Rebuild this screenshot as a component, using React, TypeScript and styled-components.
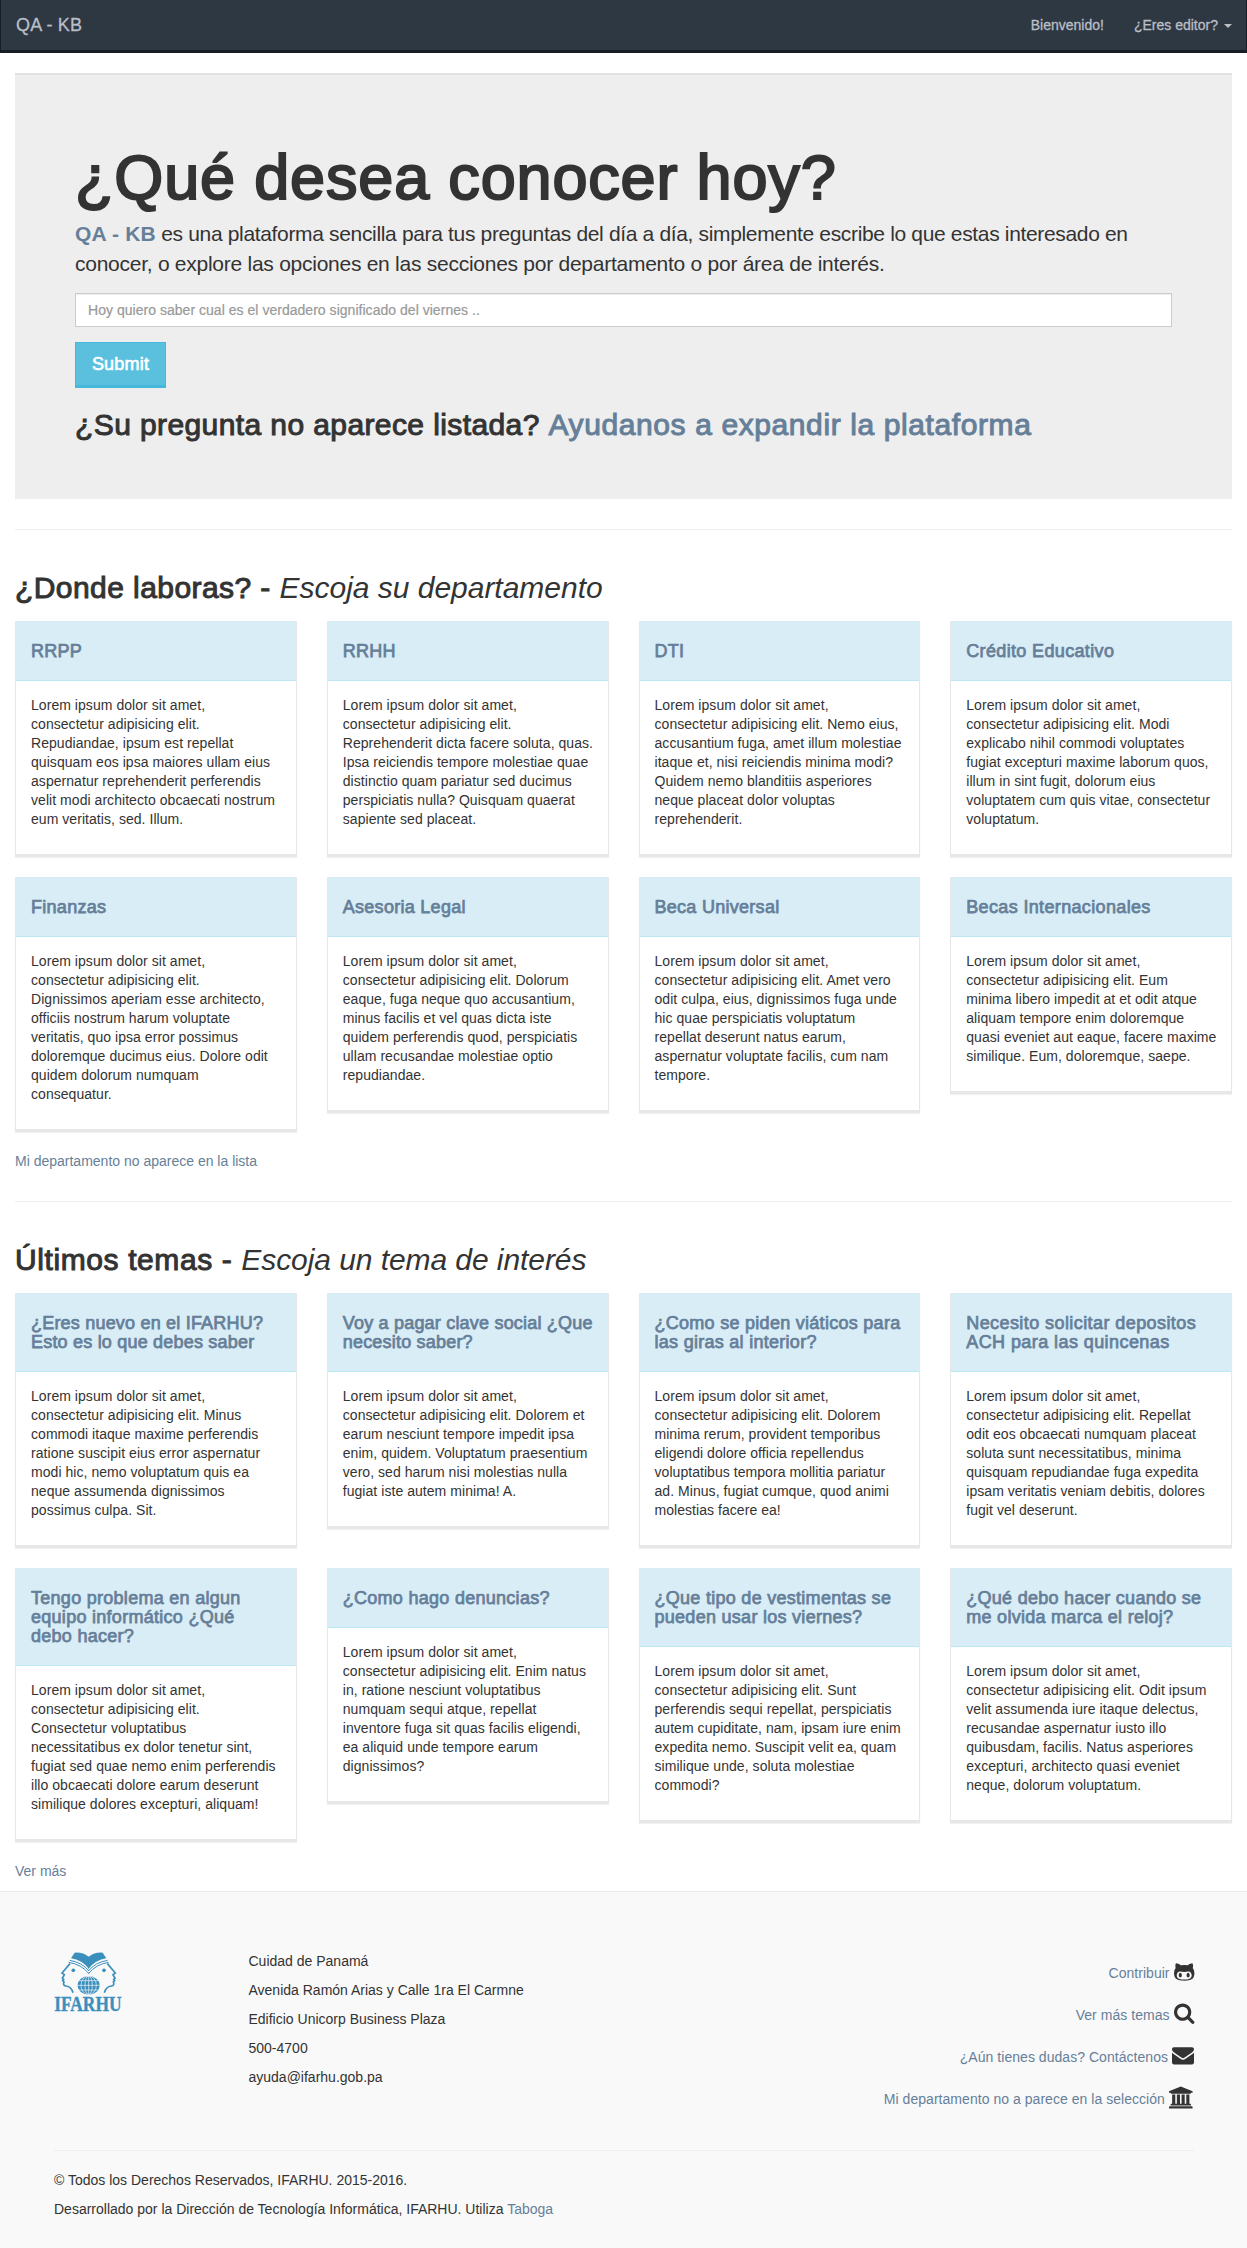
import React from "react";
import styled, { createGlobalStyle } from "styled-components";

const ink = "#333333";
const link = "#667f99";

const GlobalStyle = createGlobalStyle`
  *, *::before, *::after { box-sizing: border-box; }
  body {
    margin: 0;
    background: #fff;
    color: ${ink};
    font-family: "Helvetica Neue", "Liberation Sans", Arial, sans-serif;
    font-size: 14px;
    line-height: 19px;
    letter-spacing: 0;
  }
  h1, h2, h3, p, ul { margin: 0; padding: 0; font-weight: 400; }
  ul { list-style: none; }
`;

const Link = styled.a`
  color: ${link};
  text-decoration: none;
`;

const Navbar = styled.nav`
  display: flex;
  justify-content: space-between;
  height: 53px;
  padding: 0 14px 0 15px;
  background: #2e3842;
  border: solid #191e26;
  border-width: 0 1px 3px;
  line-height: 50px;
  a { color: #b9bec8; text-decoration: none; }
`;

const Brand = styled.a`
  font-size: 18px;
  letter-spacing: 0.15px;
  -webkit-text-stroke: 0.3px;
`;

const NavLinks = styled.div`
  display: flex;
  gap: 30px;
  a { -webkit-text-stroke: 0.3px; letter-spacing: 0; }
`;

const Caret = styled.span`
  display: inline-block;
  margin-left: 6px;
  vertical-align: middle;
  border: 4px solid transparent;
  border-top-color: currentColor;
  border-bottom: 0;
`;

const Container = styled.main`
  padding: 20px 15px 10px;
`;

const Jumbotron = styled.section`
  height: 426px;
  padding: 68px 60px 0;
  background: #eeeeee;
  border-top: 2px solid #e1e1e1;
`;

const HeroTitle = styled.h1`
  font-size: 63px;
  line-height: 69px;
  letter-spacing: 0.83px;
  -webkit-text-stroke: 2.1px;
`;

const Lead = styled.p`
  margin-top: 7px;
  font-size: 21px;
  line-height: 29.5px;
`;

const LeadLine = styled.span<{ $track: number }>`
  display: block;
  white-space: nowrap;
  letter-spacing: ${(p) => p.$track}px;
`;

const AppName = styled.b`
  color: ${link};
  letter-spacing: 0.15px;
`;

const SearchInput = styled.input`
  display: block;
  width: 100%;
  height: 34px;
  margin-top: 15px;
  padding: 6px 12px;
  border: 1px solid #cccccc;
  border-radius: 0;
  background: #fff;
  box-shadow: inset 0 1px 1px rgba(0, 0, 0, 0.075);
  font: inherit;
  letter-spacing: 0.03px;
  &::placeholder { color: #999; opacity: 1; -webkit-text-stroke: 0.2px; }
`;

const SubmitButton = styled.button`
  display: block;
  width: 91px;
  height: 46px;
  margin-top: 15px;
  padding: 0;
  background: #5bc0de;
  border: solid #46b8da;
  border-width: 1px 1px 3px;
  color: #fff;
  font: 18px/40px "Helvetica Neue", "Liberation Sans", Arial, sans-serif;
  letter-spacing: 0.2px;
  -webkit-text-stroke: 0.6px;
`;

const Heading = styled.h2<{ $top?: number; $track?: number; $subTrack?: number }>`
  margin-top: ${(p) => p.$top ?? 0}px;
  font-size: 30px;
  line-height: 33px;
  letter-spacing: ${(p) => p.$track ?? 0.43}px;
  -webkit-text-stroke: 1px;
  em, a { letter-spacing: ${(p) => p.$subTrack ?? 0}px; }
  em { -webkit-text-stroke: 0; }
`;

const Rule = styled.hr`
  height: 1px;
  margin: 30px 0 0;
  border: 0;
  background: #eeeeee;
`;

const CardGrid = styled.div`
  display: grid;
  grid-template-columns: repeat(4, minmax(0, 1fr));
  align-items: start;
  gap: 20px 30px;
  margin: 17px 0 20px;
`;

const Card = styled.article`
  background: #fff;
  border: solid #e7e7e7;
  border-width: 0 1px 3px;
  box-shadow: 0 1px 1px rgba(0, 0, 0, 0.05);
`;

const CardTitle = styled.h3<{ $track: number }>`
  padding: 21px 0 19px 15px;
  background: #d9edf7;
  border-bottom: 1px solid #bce8f1;
  color: ${link};
  font-size: 18px;
  line-height: 19px;
  letter-spacing: ${(p) => p.$track}px;
  white-space: pre;
  -webkit-text-stroke: 0.75px;
`;

const CardText = styled.p`
  padding: 15px 0 25px 15px;
  letter-spacing: 0.05px;
  white-space: pre-line;
`;

const Footer = styled.footer`
  height: 357px;
  padding: 60px 53px 0 54px;
  background: #f9f9f9;
  border-top: 1px solid #e9e9e9;
`;

const FooterColumns = styled.div`
  display: grid;
  grid-template-columns: 194.5px 1fr auto;
  height: 199px;
  border-bottom: 1px solid #eeeeee;
`;

const Lines = styled.div<{ $top?: number }>`
  display: flex;
  flex-direction: column;
  gap: 10px;
  margin-top: ${(p) => p.$top ?? 0}px;
`;

const ActionRow = styled.li`
  display: flex;
  justify-content: flex-end;
  gap: 4px;
  height: 42px;
  line-height: 42px;
  letter-spacing: 0.04px;
`;

const Icon = styled.svg<{ $top: number; $right?: number }>`
  height: 22px;
  margin: ${(p) => p.$top}px ${(p) => p.$right ?? 0}px 0 0;
  fill: ${ink};
  overflow: visible;
`;

const LogoMark = styled.svg`
  display: block;
  width: 69px;
  height: 64px;
  overflow: visible;
`;

type CardData = { title: string; text: string; track?: number };

const departments: CardData[] = [
  { title: "RRPP", text: "Lorem ipsum dolor sit amet,\nconsectetur adipisicing elit.\nRepudiandae, ipsum est repellat\nquisquam eos ipsa maiores ullam eius\naspernatur reprehenderit perferendis\nvelit modi architecto obcaecati nostrum\neum veritatis, sed. Illum." },
  { title: "RRHH", text: "Lorem ipsum dolor sit amet,\nconsectetur adipisicing elit.\nReprehenderit dicta facere soluta, quas.\nIpsa reiciendis tempore molestiae quae\ndistinctio quam pariatur sed ducimus\nperspiciatis nulla? Quisquam quaerat\nsapiente sed placeat." },
  { title: "DTI", text: "Lorem ipsum dolor sit amet,\nconsectetur adipisicing elit. Nemo eius,\naccusantium fuga, amet illum molestiae\nitaque et, nisi reiciendis minima modi?\nQuidem nemo blanditiis asperiores\nneque placeat dolor voluptas\nreprehenderit." },
  { title: "Crédito Educativo", track: 0.35, text: "Lorem ipsum dolor sit amet,\nconsectetur adipisicing elit. Modi\nexplicabo nihil commodi voluptates\nfugiat excepturi maxime laborum quos,\nillum in sint fugit, dolorum eius\nvoluptatem cum quis vitae, consectetur\nvoluptatum." },
  { title: "Finanzas", text: "Lorem ipsum dolor sit amet,\nconsectetur adipisicing elit.\nDignissimos aperiam esse architecto,\nofficiis nostrum harum voluptate\nveritatis, quo ipsa error possimus\ndoloremque ducimus eius. Dolore odit\nquidem dolorum numquam\nconsequatur." },
  { title: "Asesoria Legal", text: "Lorem ipsum dolor sit amet,\nconsectetur adipisicing elit. Dolorum\neaque, fuga neque quo accusantium,\nminus facilis et vel quas dicta iste\nquidem perferendis quod, perspiciatis\nullam recusandae molestiae optio\nrepudiandae." },
  { title: "Beca Universal", text: "Lorem ipsum dolor sit amet,\nconsectetur adipisicing elit. Amet vero\nodit culpa, eius, dignissimos fuga unde\nhic quae perspiciatis voluptatum\nrepellat deserunt natus earum,\naspernatur voluptate facilis, cum nam\ntempore." },
  { title: "Becas Internacionales", track: 0.35, text: "Lorem ipsum dolor sit amet,\nconsectetur adipisicing elit. Eum\nminima libero impedit at et odit atque\naliquam tempore enim doloremque\nquasi eveniet aut eaque, facere maxime\nsimilique. Eum, doloremque, saepe." },
];

const topics: CardData[] = [
  { title: "¿Eres nuevo en el IFARHU?\nEsto es lo que debes saber", track: 0.2, text: "Lorem ipsum dolor sit amet,\nconsectetur adipisicing elit. Minus\ncommodi itaque maxime perferendis\nratione suscipit eius error aspernatur\nmodi hic, nemo voluptatum quis ea\nneque assumenda dignissimos\npossimus culpa. Sit." },
  { title: "Voy a pagar clave social ¿Que\nnecesito saber?", track: 0.2, text: "Lorem ipsum dolor sit amet,\nconsectetur adipisicing elit. Dolorem et\nearum nesciunt tempore impedit ipsa\nenim, quidem. Voluptatum praesentium\nvero, sed harum nisi molestias nulla\nfugiat iste autem minima! A." },
  { title: "¿Como se piden viáticos para\nlas giras al interior?", text: "Lorem ipsum dolor sit amet,\nconsectetur adipisicing elit. Dolorem\nminima rerum, provident temporibus\neligendi dolore officia repellendus\nvoluptatibus tempora mollitia pariatur\nad. Minus, fugiat cumque, quod animi\nmolestias facere ea!" },
  { title: "Necesito solicitar depositos\nACH para las quincenas", track: 0.42, text: "Lorem ipsum dolor sit amet,\nconsectetur adipisicing elit. Repellat\nodit eos obcaecati numquam placeat\nsoluta sunt necessitatibus, minima\nquisquam repudiandae fuga expedita\nipsam veritatis veniam debitis, dolores\nfugit vel deserunt." },
  { title: "Tengo problema en algun\nequipo informático ¿Qué\ndebo hacer?", text: "Lorem ipsum dolor sit amet,\nconsectetur adipisicing elit.\nConsectetur voluptatibus\nnecessitatibus ex dolor tenetur sint,\nfugiat sed quae nemo enim perferendis\nillo obcaecati dolore earum deserunt\nsimilique dolores excepturi, aliquam!" },
  { title: "¿Como hago denuncias?", text: "Lorem ipsum dolor sit amet,\nconsectetur adipisicing elit. Enim natus\nin, ratione nesciunt voluptatibus\nnumquam sequi atque, repellat\ninventore fuga sit quas facilis eligendi,\nea aliquid unde tempore earum\ndignissimos?" },
  { title: "¿Que tipo de vestimentas se\npueden usar los viernes?", text: "Lorem ipsum dolor sit amet,\nconsectetur adipisicing elit. Sunt\nperferendis sequi repellat, perspiciatis\nautem cupiditate, nam, ipsam iure enim\nexpedita nemo. Suscipit velit ea, quam\nsimilique unde, soluta molestiae\ncommodi?" },
  { title: "¿Qué debo hacer cuando se\nme olvida marca el reloj?", text: "Lorem ipsum dolor sit amet,\nconsectetur adipisicing elit. Odit ipsum\nvelit assumenda iure itaque delectus,\nrecusandae aspernatur iusto illo\nquibusdam, facilis. Natus asperiores\nexcepturi, architecto quasi eveniet\nneque, dolorum voluptatum." },
];

const Cards = ({ items }: { items: CardData[] }) => (
  <CardGrid>
    {items.map((c) => (
      <Card key={c.title}>
        <CardTitle $track={c.track ?? 0.28}>{c.title}</CardTitle>
        <CardText>{c.text}</CardText>
      </Card>
    ))}
  </CardGrid>
);

const actions = [
  {
    label: "Contribuir",
    width: 1664,
    top: 8.5,
    right: 0,
    path: "M640 1152q0 40-12.5 82t-43 76-72.5 34-72.5-34-43-76-12.5-82 12.5-82 43-76 72.5-34 72.5 34 43 76 12.5 82zm640 0q0 40-12.5 82t-43 76-72.5 34-72.5-34-43-76-12.5-82 12.5-82 43-76 72.5-34 72.5 34 43 76 12.5 82zm160 0q0-120-69-204t-187-84q-41 0-195 21-71 11-157 11t-157-11q-152-21-195-21-118 0-187 84t-69 204q0 88 32 153.5t81 103 122 60 140 29.5 149 7h168q82 0 149-7t140-29.5 122-60 81-103 32-153.5zm224-176q0 207-61 331-38 77-105.5 133t-141 86-170 47.5-171.5 22-167 4.5q-78 0-142-3t-147.5-12.5-152.5-30-137-51.5-121-81-86-115q-62-123-62-331 0-237 136-396-27-82-27-170 0-116 51-218 108 0 190 39.5t189 123.5q147-35 309-35 148 0 280 32 105-82 187-121t189-39q51 102 51 218 0 87-27 168 136 160 136 398z",
  },
  {
    label: "Ver más temas",
    width: 1664,
    top: 8,
    right: 0,
    path: "M1152 832q0-185-131.5-316.5t-316.5-131.5-316.5 131.5-131.5 316.5 131.5 316.5 316.5 131.5 316.5-131.5 131.5-316.5zm512 832q0 52-38 90t-90 38q-54 0-90-38l-343-342q-179 124-399 124-143 0-273.5-55.5t-225-150-150-225-55.5-273.5 55.5-273.5 150-225 225-150 273.5-55.5 273.5 55.5 225 150 150 225 55.5 273.5q0 220-124 399l343 343q37 37 37 90z",
  },
  {
    label: "¿Aún tienes dudas? Contáctenos",
    width: 1792,
    top: 8,
    right: 0,
    path: "M1792 710v794q0 66-47 113t-113 47h-1472q-66 0-113-47t-47-113v-794q44 49 101 87 362 246 497 345 57 42 92.5 65.5t94.5 48 110 24.5h2q51 0 110-24.5t94.5-48 92.5-65.5q170-123 498-345 57-39 100-87zm0-294q0 79-49 151t-122 123q-376 261-468 325-10 7-42.5 31t-54 38.8-52 33.2-57.5 27-50 9h-2q-23 0-50-9t-57.5-27-52-33.2-54-38.8-42.5-31q-91-64-262-182.5t-205-142.5q-62-42-117-115.5t-55-136.5q0-78 41.5-130t118.5-52h1472q65 0 112.5 47t47.5 113z",
  },
  {
    label: "Mi departamento no a parece en la selección",
    width: 1920,
    top: 6.5,
    right: 1.5,
    path: "M960 128l960 384v128h-128q0 26-20.5 45t-48.5 19h-1526q-28 0-48.5-19t-20.5-45h-128v-128zm-704 640h256v768h128v-768h256v768h128v-768h256v768h128v-768h256v768h59q28 0 48.5 19t20.5 45v64h-1664v-64q0-26 20.5-45t48.5-19h59v-768zm1595 960q28 0 48.5 19t20.5 45v128h-1920v-128q0-26 20.5-45t48.5-19h1782z",
  },
];

const Face = ({ flip = false }: { flip?: boolean }) => (
  <g transform={flip ? "translate(292 0) scale(-1 1)" : undefined}>
    <path
      d="M90 70 L66 98 L73 103 L67 114 L71 117 L68 121 L72 125 Q67 135 78 137 Q94 139 99 157"
      fill="none"
      stroke="#3a8fbd"
      strokeWidth="5"
    />
    <path d="M86 66 Q124 72 147 100" fill="none" stroke="#3a8fbd" strokeWidth="3" />
    <path d="M89 60 Q126 66 147 92" fill="none" stroke="#3a8fbd" strokeWidth="3" />
    <path d="M147 50 Q128 35 104 37 L93 54 Q126 59 147 86 Z" fill="#3a8fbd" />
    <circle cx="100" cy="90" r="5.5" fill="#3a8fbd" />
  </g>
);

const Logo = () => (
  <LogoMark viewBox="42 35 207 192" preserveAspectRatio="none">
    <Face />
    <Face flip />
    <ellipse cx="146" cy="135" rx="33" ry="28" fill="#3a8fbd" />
    <g fill="none" stroke="#e4f0f6" strokeWidth="2.2">
      <path d="M146 107V163M117 121H175M112 135H180M117 149H175" />
      <ellipse cx="146" cy="135" rx="11" ry="28" />
      <ellipse cx="146" cy="135" rx="23" ry="28" />
    </g>
    <text
      x="42.5"
      y="211"
      textLength="202"
      lengthAdjust="spacingAndGlyphs"
      fontFamily="'Liberation Serif', serif"
      fontWeight="700"
      fontSize="61"
      letterSpacing="0"
      fill="#3a8fbd"
      stroke="#3a8fbd"
      strokeWidth="1"
    >
      IFARHU
    </text>
  </LogoMark>
);

export default function App() {
  return (
    <>
      <GlobalStyle />
      <Navbar>
        <Brand href="#">QA - KB</Brand>
        <NavLinks>
          <a href="#">Bienvenido!</a>
          <a href="#">
            ¿Eres editor?
            <Caret />
          </a>
        </NavLinks>
      </Navbar>
      <Container>
        <Jumbotron>
          <HeroTitle>¿Qué desea conocer hoy?</HeroTitle>
          <Lead>
            <LeadLine $track={-0.34}>
              <AppName>QA - KB</AppName> es una plataforma sencilla para tus preguntas del día a
              día, simplemente escribe lo que estas interesado en
            </LeadLine>
            <LeadLine $track={-0.26}>
              conocer, o explore las opciones en las secciones por departamento o por área de
              interés.
            </LeadLine>
          </Lead>
          <SearchInput placeholder="Hoy quiero saber cual es el verdadero significado del viernes .." />
          <SubmitButton>Submit</SubmitButton>
          <Heading $top={20} $track={0.4} $subTrack={0.6}>
            ¿Su pregunta no aparece listada?{" "}
            <Link href="#">Ayudanos a expandir la plataforma</Link>
          </Heading>
        </Jumbotron>
        <Rule />
        <Heading $top={41} $subTrack={-0.02}>
          ¿Donde laboras? - <em>Escoja su departamento</em>
        </Heading>
        <Cards items={departments} />
        <p>
          <Link href="#">Mi departamento no aparece en la lista</Link>
        </p>
        <Rule />
        <Heading $top={41} $track={0.6} $subTrack={-0.07}>
          Últimos temas - <em>Escoja un tema de interés</em>
        </Heading>
        <Cards items={topics} />
        <p>
          <Link href="#">Ver más</Link>
        </p>
      </Container>
      <Footer>
        <FooterColumns>
          <Logo />
          <Lines>
            <p>Cuidad de Panamá</p>
            <p>Avenida Ramón Arias y Calle 1ra El Carmne</p>
            <p>Edificio Unicorp Business Plaza</p>
            <p>500-4700</p>
            <p>ayuda@ifarhu.gob.pa</p>
          </Lines>
          <ul>
            {actions.map((a) => (
              <ActionRow key={a.label}>
                <Link href="#">{a.label}</Link>
                <Icon
                  $top={a.top}
                  $right={a.right}
                  viewBox={`0 0 ${a.width} 1792`}
                  width={(a.width * 22) / 1792}
                >
                  <path d={a.path} />
                </Icon>
              </ActionRow>
            ))}
          </ul>
        </FooterColumns>
        <Lines $top={20}>
          <p>© Todos los Derechos Reservados, IFARHU. 2015-2016.</p>
          <p>
            Desarrollado por la Dirección de Tecnología Informática, IFARHU. Utiliza{" "}
            <Link href="#">Taboga</Link>
          </p>
        </Lines>
      </Footer>
    </>
  );
}
